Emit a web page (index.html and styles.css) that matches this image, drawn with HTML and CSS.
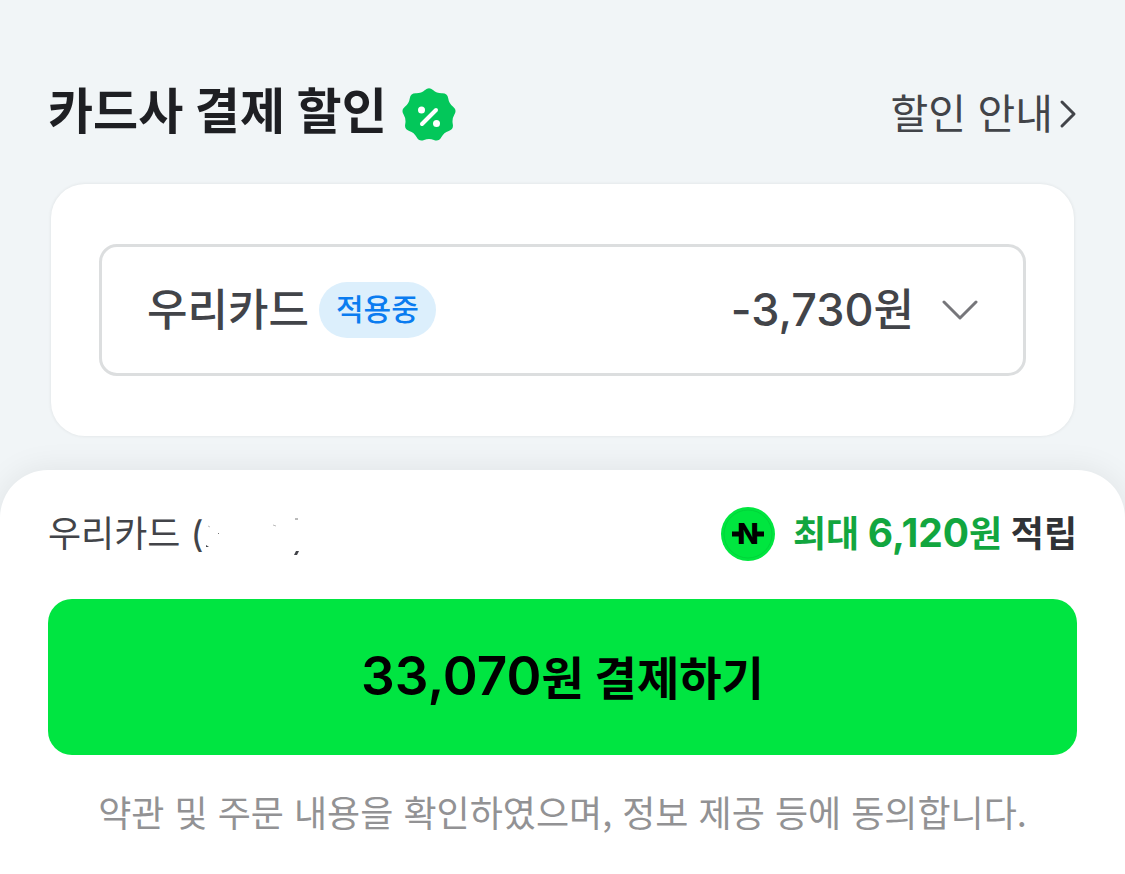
FILE: index.html
```html
<!DOCTYPE html>
<html lang="ko">
<head>
  <meta charset="UTF-8" />
  <meta name="viewport" content="width=device-width, initial-scale=1" />
  <title>카드사 결제 할인</title>
  <link rel="stylesheet" href="styles.css">
</head>
<body>

<main class="discount">
  <header class="discount-header">
    <h1 class="discount-title">
      카드사 결제 할인
      <svg class="percent-badge" viewBox="-27 -27 54 54" aria-hidden="true">
        <path fill="#03c75a" d="M-4-25.1Q0-28.600 4-25.100Q7.900-21.600 13.100-21.800Q18.400-21.900 19.200-16.700Q19.900-11.500 24.100-8.300Q28.200-5 25.400-.5Q22.700 4 23.800 9.200Q24.800 14.300 19.800 16Q14.800 17.600 12.300 22.300Q9.800 26.900 4.900 25Q0 23-4.900 25Q-9.800 26.900-12.300 22.300Q-14.800 17.600-19.800 16Q-24.800 14.300-23.800 9.200Q-22.700 4-25.400-.5Q-28.200-5-24.100-8.300Q-19.900-11.500-19.200-16.700Q-18.400-21.900-13.100-21.800Q-7.900-21.600-4-25.100Z"/>
        <path d="M-7 9L7-5" stroke="#fff" stroke-width="4" stroke-linecap="round"/>
        <circle cx="-7.500" cy="-5" r="3.500" fill="#fff"/>
        <circle cx="7.500" cy="8.500" r="3.500" fill="#fff"/>
      </svg>
    </h1>
    <a href="#" class="guide-link">
      할인 안내
      <svg class="guide-arrow" viewBox="0 0 18 30" aria-hidden="true">
        <path d="M3 3L15 15L3 27" fill="none" stroke="#424449" stroke-width="3" stroke-linecap="round" stroke-linejoin="round"/>
      </svg>
    </a>
  </header>

  <section class="card-box">
    <div class="card-picker">
      <select id="cardSelect" class="card-select" aria-label="카드 선택">
        <option>우리카드</option>
      </select>
      <span class="applied">적용중</span>
      <label for="cardSelect" class="amount"><span class="amount-num">-3,730</span>원</label>
      <svg class="picker-arrow" viewBox="0 0 36 22" aria-hidden="true">
        <path d="M2 3L18 19L34 3" fill="none" stroke="#76767a" stroke-width="3" stroke-linecap="round" stroke-linejoin="round"/>
      </svg>
    </div>
  </section>
</main>

<footer class="pay-sheet">
  <div class="pay-summary">
    <div class="pay-card">
      우리카드 (
      <!-- 가려진 카드 번호 -->
      <svg class="masked" viewBox="0 0 100 40" aria-hidden="true">
        <path d="M4 11L6 12M69 10L72 11" stroke="#bbb" stroke-width="1"/>
        <path d="M14 18L15 19M91 4H94" fill="none" stroke="#777" stroke-width="1"/>
        <path d="M2 30L5 32L2 32ZM92 36H95L93 40H90Z" fill="#424449"/>
      </svg>
    </div>
    <div class="reward">
      <svg class="npay" viewBox="0 0 54 54" aria-hidden="true">
        <circle cx="27" cy="27" r="27" fill="#00e63f"/>
        <circle cx="27" cy="27" r="24" fill="none" stroke="#00d43a" stroke-width="1"/>
        <path d="M11 27H19M35 27H43" stroke="#000" stroke-width="5"/>
        <text x="27" y="37" text-anchor="middle" class="npay-letter">N</text>
      </svg>
      <span><em class="reward-amount">최대 <span class="reward-num">6,120</span>원</em> 적립</span>
    </div>
  </div>
  <button type="button" class="btn-pay"><span class="pay-num">33,070</span>원 결제하기</button>
  <p class="terms">약관 및 주문 내용을 확인하였으며, 정보 제공 등에 동의합니다.</p>
</footer>

</body>
</html>
```
FILE: styles.css
```css
* { box-sizing: border-box; }
body {
  margin: 0;
  min-height: 100vh;
  display: flex;
  flex-direction: column;
  background: #f1f5f7;
  color: #424449;
  font-family: Inter, 'Noto Sans CJK KR', sans-serif;
}
svg { flex: none; }

.discount { padding: 80px 48px 34px; }
.discount-header {
  display: flex;
  justify-content: space-between;
  align-items: center;
  height: 68px;
  margin-bottom: 36px;
}
.discount-title {
  display: flex;
  align-items: center;
  gap: 15px;
  margin: 0;
  padding-bottom: 4px;
  color: #1e1f23;
  font-size: 49px;
  font-weight: 700;
  line-height: 60px;
}
.percent-badge { width: 54px; height: 54px; margin-top: 6px; }
.guide-link {
  display: flex;
  align-items: center;
  gap: 6px;
  color: #424449;
  font-size: 41px;
  line-height: 60px;
  text-decoration: none;
}
.guide-arrow { width: 18px; height: 30px; }

.card-box {
  margin: 0 3px;
  padding: 60px 48px;
  background: #fff;
  border-radius: 34px;
  box-shadow: 0 0 3px 1px rgb(0 0 0 / 0.05);
}
.card-picker {
  display: flex;
  align-items: center;
  height: 132px;
  padding: 0 45px;
  border: 3px solid #dcdedf;
  border-radius: 18px;
}
.card-select {
  appearance: none;
  margin: 0;
  padding: 0;
  border: none;
  background: none;
  color: inherit;
  font: 500 44px/60px Inter, 'Noto Sans CJK KR', sans-serif;
}
.applied {
  margin-left: 10px;
  padding: 0 17px 2px;
  border-radius: 28px;
  background: #dceffc;
  color: #0a7cf0;
  font-size: 30px;
  font-weight: 500;
  line-height: 54px;
}
.amount {
  margin-left: auto;
  font-size: 44px;
  font-weight: 500;
  line-height: 60px;
}
.amount-num { font-size: 45px; }
.picker-arrow { width: 36px; height: 22px; margin-left: 28px; }

.pay-sheet {
  flex: 1;
  padding: 34px 48px;
  background: #fff;
  border-radius: 48px 48px 0 0;
  box-shadow: 0 0 32px rgb(0 0 0 / 0.08);
}
.pay-summary {
  display: flex;
  justify-content: space-between;
  align-items: center;
  height: 60px;
  margin-bottom: 35px;
  font-size: 36px;
  line-height: 54px;
}
.pay-card {
  display: flex;
  align-items: center;
}
.masked { width: 100px; height: 40px; margin-top: 2px; }
.reward {
  display: flex;
  align-items: center;
  gap: 18px;
  color: #303236;
  font-weight: 700;
}
.reward > span { padding-bottom: 2px; }
.reward-amount { color: #12a63f; font-style: normal; }
.reward-num { font-size: 39px; }
.npay { width: 54px; height: 54px; }
.npay-letter { font-size: 28px; font-weight: 800; }
.btn-pay {
  display: block;
  width: 100%;
  height: 156px;
  padding: 0 0 4px;
  border: none;
  border-radius: 24px;
  background: #00e541;
  color: #000;
  font-family: inherit;
  font-size: 46px;
  font-weight: 700;
  cursor: pointer;
}
.pay-num { font-size: 53px; font-weight: 600; }
.terms {
  margin: 26px 0 0;
  color: #929294;
  font-family: 'Noto Sans CJK KR', sans-serif;
  font-size: 36px;
  line-height: 60px;
  text-align: center;
}
```
